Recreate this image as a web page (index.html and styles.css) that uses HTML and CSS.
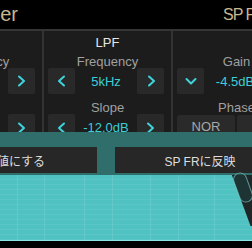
FILE: index.html
```html
<!DOCTYPE html>
<html lang="ja">
<head>
<meta charset="UTF-8">
<meta name="viewport" content="width=device-width, initial-scale=1.0">
<title>Equalizer</title>
<link rel="stylesheet" href="styles.css">
</head>
<body>
<div class="screen">
  <header class="titlebar">
    <div class="title-left"><span>Equalizer</span></div>
    <div class="title-right">SP FR</div>
  </header>

  <section class="panel">
    <div class="col">
      <div class="head">HPF</div>
      <div class="label">Frequency</div>
      <div class="ctrl">
        <button class="arrow"><svg viewBox="0 0 12 12"><polyline points="8,1.5 3,6 8,10.5"/></svg></button>
        <span class="value">80Hz</span>
        <button class="arrow"><svg viewBox="0 0 12 12"><polyline points="4,1.5 9,6 4,10.5"/></svg></button>
      </div>
      <div class="label second">Slope</div>
      <div class="ctrl tall">
        <button class="arrow"><svg viewBox="0 0 12 12"><polyline points="8,1.5 3,6 8,10.5"/></svg></button>
        <span class="value">-12.0dB</span>
        <button class="arrow"><svg viewBox="0 0 12 12"><polyline points="4,1.5 9,6 4,10.5"/></svg></button>
      </div>
    </div>

    <div class="col">
      <div class="head">LPF</div>
      <div class="label">Frequency</div>
      <div class="ctrl">
        <button class="arrow"><svg viewBox="0 0 12 12"><polyline points="8,1.5 3,6 8,10.5"/></svg></button>
        <span class="value">5kHz</span>
        <button class="arrow"><svg viewBox="0 0 12 12"><polyline points="4,1.5 9,6 4,10.5"/></svg></button>
      </div>
      <div class="label second">Slope</div>
      <div class="ctrl tall">
        <button class="arrow"><svg viewBox="0 0 12 12"><polyline points="8,1.5 3,6 8,10.5"/></svg></button>
        <span class="value">-12.0dB</span>
        <button class="arrow"><svg viewBox="0 0 12 12"><polyline points="4,1.5 9,6 4,10.5"/></svg></button>
      </div>
    </div>

    <div class="col">
      <div class="head">&nbsp;</div>
      <div class="label">Gain</div>
      <div class="ctrl">
        <button class="arrow"><svg viewBox="0 0 12 12"><polyline points="1.5,4 6,8.5 10.5,4"/></svg></button>
        <span class="value">-4.5dB</span>
        <button class="arrow"><svg viewBox="0 0 12 12"><polyline points="1.5,8 6,3.5 10.5,8"/></svg></button>
      </div>
      <div class="label second">Phase</div>
      <div class="ctrl tall">
        <div class="seg">
          <button class="seg-btn">NOR</button>
          <button class="seg-btn">REV</button>
        </div>
      </div>
    </div>
  </section>

  <div class="actions">
    <button class="action reset">初期値にする</button>
    <button class="action apply">SP FRに反映</button>
  </div>

  <div class="graph"></div>

  <div class="edge"></div>
  <div class="handle"></div>
</div>
</body>
</html>
```

FILE: styles.css
```css
html, body {
    margin: 0;
    background: #000;
}

body {
    width: 252px;
    height: 248px;
    overflow: hidden;
    font-family: "Liberation Sans", "Noto Sans CJK JP", sans-serif;
}

.screen {
    position: relative;
    height: 248px;
    overflow: hidden;
}

/* title bar */
.titlebar {
    display: flex;
    align-items: center;
    height: 29px;
    border-bottom: 2px solid #353535;
    color: #c8b98c;
    font-size: 20px;
    white-space: nowrap;
}

.title-left {
    width: 18px;
    flex-shrink: 0;
    display: flex;
    justify-content: flex-end;
}

.title-right {
    margin-left: 205px;
    font-size: 16px;
    letter-spacing: -1px;
}

/* settings panel */
.panel {
    position: relative;
    z-index: 1;
    display: grid;
    grid-template-columns: repeat(3, 129px);
    margin-left: -87px;
    height: 101px;
    background: #1c1c1c;
}

.col {
    display: flex;
    flex-direction: column;
    border-left: 2px solid #333;
    text-align: center;
}

.head {
    height: 24px;
    line-height: 24px;
    font-size: 13px;
    color: #e6e6e6;
}

.label {
    height: 13px;
    line-height: 13px;
    font-size: 13px;
    color: #a0a0a0;
}

.label.second {
    margin-top: 7px;
}

.ctrl {
    display: flex;
    align-items: center;
    justify-content: space-between;
    height: 26px;
    padding: 0 7px 0 4px;
}

.ctrl.tall {
    height: 27px;
    align-items: flex-start;
}

.arrow {
    width: 27px;
    height: 26px;
    padding: 0;
    border: none;
    border-radius: 2px;
    background: rgba(44, 44, 44, 0.82);
    display: flex;
    align-items: center;
    justify-content: center;
}

.tall .arrow {
    height: 28px;
}

.arrow svg {
    width: 12px;
    height: 12px;
    fill: none;
    stroke: #3fd3dc;
    stroke-width: 2;
    stroke-linecap: round;
    stroke-linejoin: round;
}

.value {
    font-size: 13px;
    color: #3ccfd6;
}

.tall .value {
    line-height: 28px;
}

.seg {
    display: flex;
    gap: 2px;
    margin-top: 1px;
}

.seg-btn {
    width: 58px;
    height: 22px;
    padding: 0;
    border: none;
    border-radius: 2px;
    background: rgba(44, 44, 44, 0.9);
    color: #a8a8a8;
    font-family: inherit;
    font-size: 13px;
}

/* buttons under the panel */
.actions {
    position: relative;
    z-index: 2;
    display: flex;
    gap: 18px;
    height: 43px;
    box-sizing: border-box;
    padding-top: 15px;
    margin-left: -91px;
    background: #2f6e6b;
}

.action {
    flex-shrink: 0;
    box-sizing: border-box;
    height: 26px;
    padding: 0;
    border: none;
    background: #272727;
    color: #dedede;
    font-family: inherit;
    font-size: 12px;
}

.reset {
    width: 188px;
    padding-left: 12px;
}

.apply {
    width: 170px;
}

/* eq graph */
.graph {
    height: 65px;
    border-bottom: 1px solid #8ee4e4;
    background-color: #50c2c2;
    background-image:
        repeating-linear-gradient(0deg, rgba(255, 255, 255, 0.06) 0 1px, transparent 1px 5px),
        linear-gradient(90deg, transparent 17px, rgba(255,255,255,.1) 17px 18px, transparent 18px 44px,
            rgba(255,255,255,.1) 44px 45px, transparent 45px 84px, rgba(255,255,255,.1) 84px 85px,
            transparent 85px 112px, rgba(255,255,255,.1) 112px 113px, transparent 113px 150px,
            rgba(255,255,255,.1) 150px 151px, transparent 151px 178px, rgba(255,255,255,.1) 178px 179px,
            transparent 179px 214px, rgba(255,255,255,.1) 214px 215px, transparent 215px);
}

/* dark frame edge on the right, over the graph */
.edge {
    position: absolute;
    z-index: 1;
    top: 132px;
    right: 0;
    width: 36px;
    height: 94px;
    background: #1f2626;
    clip-path: polygon(0 0, 100% 0, 100% 100%, 96% 100%);
}

.handle {
    position: absolute;
    z-index: 3;
    left: 236px;
    top: 172px;
    width: 12px;
    height: 29px;
    border: 1px solid rgba(150, 230, 230, 0.55);
    border-radius: 7px;
    background: rgba(30, 60, 60, 0.6);
    transform: rotate(-20deg);
}
```
